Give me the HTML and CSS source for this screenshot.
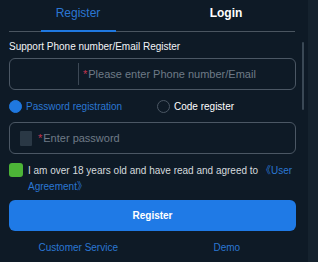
FILE: index.html
```html
<!DOCTYPE html>
<html>
<head>
<meta charset="utf-8">
<link rel="stylesheet" href="styles.css">
</head>
<body>
<div class="page">
  <div class="main">
    <div class="content">
      <div class="tabs-wrap">
        <div class="tabs">
          <div class="tab active"><span>Register</span></div>
          <div class="tab"><span>Login</span></div>
        </div>
      </div>
      <div class="label">Support Phone number/Email Register</div>
      <div class="field phone">
        <div class="prefix"></div>
        <div class="divider"></div>
        <div class="ph"><span class="req">*</span>Please enter Phone number/Email</div>
      </div>
      <div class="radios">
        <div class="radio on"><span class="dot"></span>Password registration</div>
        <div class="radio"><span class="dot"></span>Code register</div>
      </div>
      <div class="field pwd">
        <span class="lock"></span>
        <div class="ph"><span class="req">*</span>Enter password</div>
      </div>
      <div class="agree">
        <span class="check"></span>
        <p>I am over 18 years old and have read and agreed to <a class="ua">《User</a> <a class="ua">Agreement》</a></p>
      </div>
      <button class="btn">Register</button>
      <div class="links">
        <a>Customer Service</a>
        <a>Demo</a>
      </div>
    </div>
    <div class="scrollbar"></div>
  </div>
  <div class="side"></div>
</div>
</body>
</html>
```
FILE: styles.css
```css
* { box-sizing: border-box; }
html, body { margin: 0; padding: 0; }
body {
  background: #0e1a26;
  font-family: Arial, "Liberation Sans", "Noto Sans CJK SC", sans-serif;
  width: 318px;
  height: 262px;
  overflow: hidden;
}
.page { display: flex; height: 262px; }
.main { width: 308px; display: flex; padding-left: 9px; }
.side { width: 10px; background: #15222e; }
.content { width: 287px; flex: none; }
.scrollbar {
  width: 2px;
  height: 68px;
  margin-top: 42px;
  margin-left: 6px;
  background: #3a4855;
  border-radius: 1px;
}
.tabs-wrap {
  border-bottom: 1px solid #4a5560;
  margin-right: 1px;
}
.tabs {
  display: grid;
  grid-template-columns: 1fr 1fr;
  margin: 0 -5px 0 -5px;
}
.tab {
  display: flex;
  justify-content: center;
  height: 32px;
  margin-bottom: -1px;
}
.tab span {
  display: block;
  font-size: 12px;
  line-height: 16px;
  padding-top: 5px;
  color: #fff;
  font-weight: bold;
}
.tab.active span {
  color: #2b77d3;
  font-weight: normal;
  width: 75px;
  text-align: center;
  border-bottom: 2px solid #1f78e0;
  height: 32px;
}
.label {
  color: #f2f4f6;
  font-size: 10px;
  line-height: 14px;
  margin-top: 8px;
}
.field {
  border: 1px solid #4b5764;
  border-radius: 6px;
  display: flex;
  align-items: center;
}
.phone { height: 32px; margin-top: 4px; }
.prefix { width: 68px; }
.divider { width: 1px; height: 22px; background: #3c4855; }
.ph {
  color: #6e7a87;
  font-size: 11px;
  line-height: 14px;
  margin-left: 4px;
}
.req { color: #c2344f; margin-right: 1px; }
.radios {
  display: flex;
  height: 16px;
  margin-top: 8px;
  align-items: center;
}
.radio {
  flex: none;
  display: flex;
  align-items: center;
  font-size: 10px;
  color: #fff;
  width: 148px;
}
.radio .dot {
  flex: none;
  width: 13px;
  height: 13px;
  border-radius: 50%;
  border: 1px solid #4b5764;
  margin-right: 4px;
}
.radio.on { color: #2b77d3; }
.radio.on .dot { background: #1f78e0; border-color: #1f78e0; }
.pwd { height: 32px; margin-top: 8px; padding-left: 10px; }
.lock {
  width: 12px;
  height: 15px;
  background: #2a3845;
  border-radius: 1px;
}
.pwd .ph { margin-left: 6px; }
.agree {
  display: flex;
  margin-top: 9px;
}
.check {
  flex: none;
  width: 14px;
  height: 14px;
  background: #4cb437;
  border-radius: 3px;
}
.agree p {
  margin: 0 0 0 5px;
  color: #d5dade;
  font-size: 10px;
  line-height: 16px;
}
.agree .ua { color: #2b77d3; }
.btn {
  display: block;
  width: 287px;
  height: 31px;
  margin-top: 5px;
  border: none;
  border-radius: 6px;
  background: #1f7ae6;
  color: #fff;
  font-family: Arial, "Liberation Sans", sans-serif;
  font-weight: bold;
  font-size: 10px;
}
.links {
  display: grid;
  grid-template-columns: 1fr 1fr;
  margin: 10px -5px 0 -5px;
  text-align: center;
  font-size: 10px;
  line-height: 14px;
  color: #2b77d3;
}
```
